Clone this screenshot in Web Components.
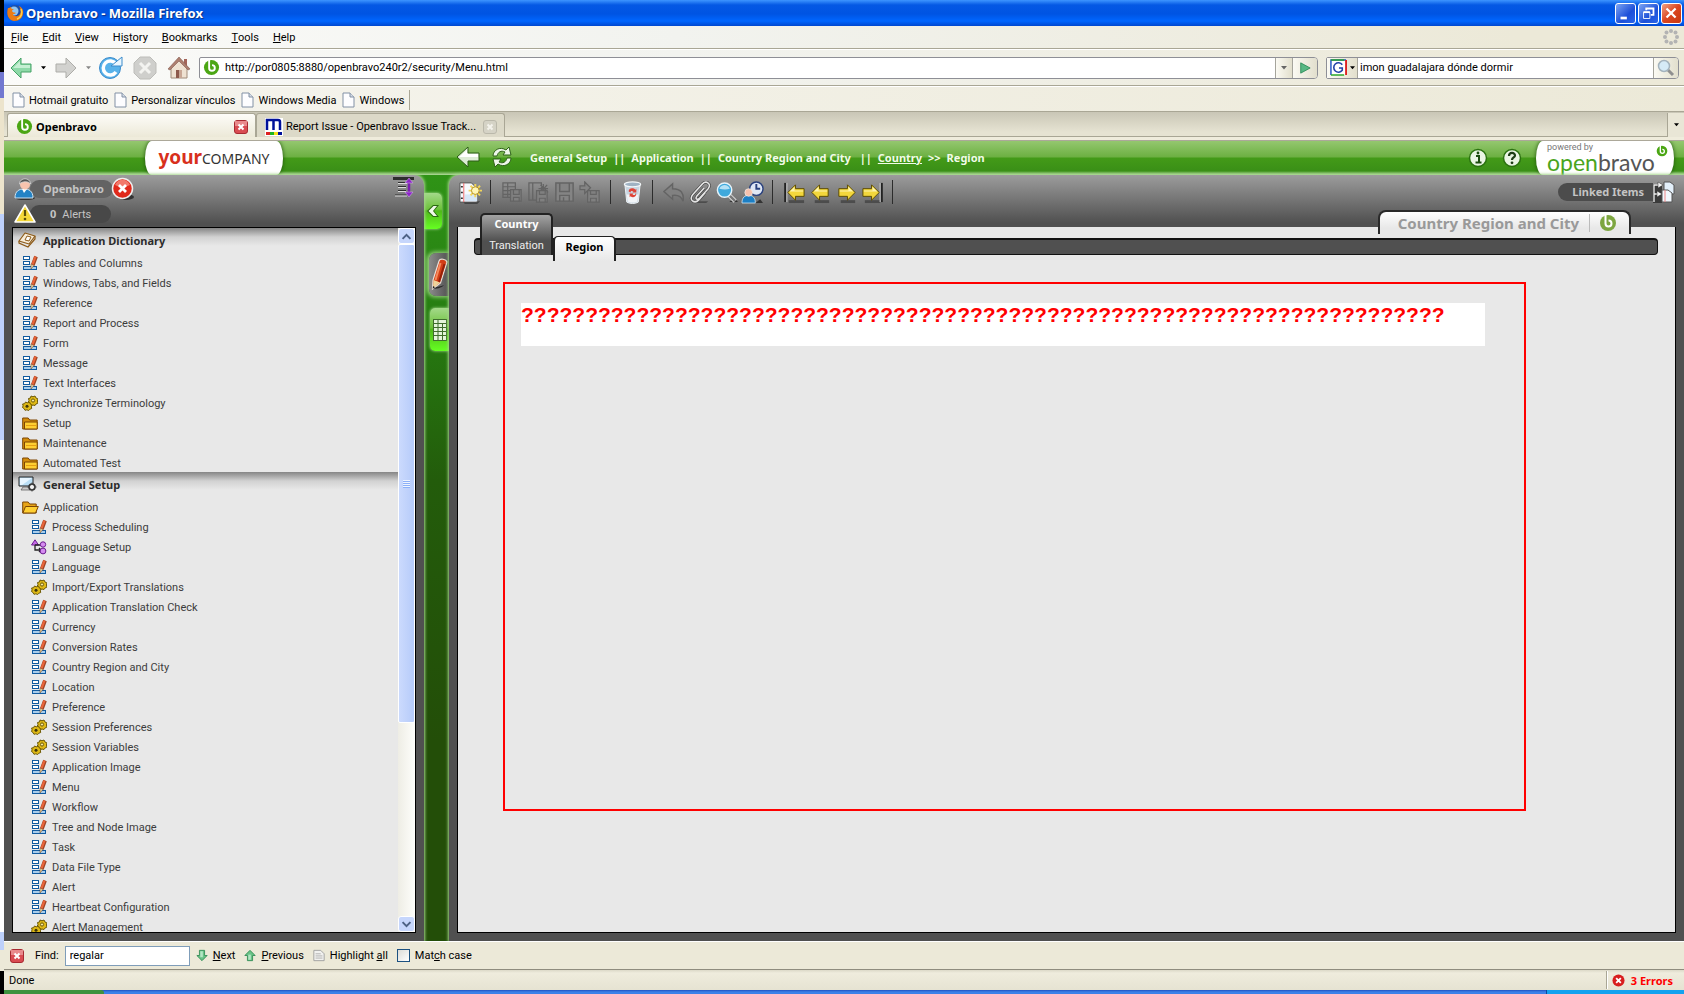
<!DOCTYPE html>
<html lang="en">
<head>
<meta charset="utf-8">
<title>Openbravo - Mozilla Firefox</title>
<style>
    :root{
        --ui-font: Roboto, "Noto Sans", sans-serif;
        --ui-bold: "Noto Sans", "DejaVu Sans", sans-serif;
        --chrome: #ece9d8;
        --panel: #505050;
        --paper: #e8e8e8;
        --panel-top: linear-gradient(#9c9c9c 0, #505050 48px);
        --glow: #a5d58c;
    }
    body{
        margin:0;
        height:100vh;
        overflow:hidden;
        font-family: var(--ui-font);
        font-size:11px;
        color:#000;
    }
</style>
</head>
<body>
<ob-desktop></ob-desktop>
<script>
const ICONS = {
    firefox: ['0 0 18 18', `<circle cx="9" cy="9" r="8" fill="#1c4fa8"/><circle cx="8" cy="7" r="4.5" fill="#8fc4f2"/><path d="M2 4C0 10 2 16 8 17c7 0 10-5 9-11-1-2-2-3-4-4 2 3 2 6 1 8-2 3-6 3-7 0 1 0 2 0 3-1-2-1-3 0-4-2 0-1 1-1 2-2-2 0-3 0-3-2-2 1-2 1-3 1z" fill="#ec7c15"/><path d="M15 5c2 4 0 9-4 10" fill="none" stroke="#ffd24a" stroke-width="1.5"/>`],
    back: ['0 0 24 24', `<path d="M2 12 12 2v6h10v8H12v6z" fill="#8ed9a8" stroke="#45a267" stroke-linejoin="round"/><path d="M4 12 11 5v4h10v3z" fill="#c5efd2"/>`],
    forward: ['0 0 24 24', `<path d="M22 12 12 2v6H2v8h10v6z" fill="#d2d2cf" stroke="#adada9" stroke-linejoin="round"/>`],
    drop: ['0 0 6 4', `<path d="M0 0h6L3 3.5z" fill="currentColor"/>`],
    reload: ['0 0 24 24', `<circle cx="11" cy="12" r="10.5" fill="#58b2ea" stroke="#3b8bcb"/><path d="M17 16a7 7 0 1 1 0-8" fill="none" stroke="#fff" stroke-width="3.5"/><path d="M12 10h11V1z" fill="#eaf7ff" stroke="#3b8bcb"/>`],
    stop: ['0 0 24 24', `<path d="M7 1h10l6 6v10l-6 6H7l-6-6V7z" fill="#cfcfcc" stroke="#bdbdb9"/><path d="M7 7l10 10M17 7 7 17" stroke="#f3f3f0" stroke-width="3"/>`],
    home: ['0 0 24 24', `<path d="M17 3h3v7h-3z" fill="#a4655a"/><path d="M4 11 12 3l8 8v11H4z" fill="#efe2d2" stroke="#a08b78"/><path d="M1 13 12 1l11 12-2 1L12 5 3 14z" fill="#ad7f70" stroke="#84594d" stroke-width=".6"/><path d="M9 14h6v8H9z" fill="#8d5a4c"/><path d="M12 14h3v8h-3z" fill="#c9a795"/>`],
    go: ['0 0 14 14', `<path d="M2 1 13 7 2 13z" fill="#58b884" stroke="#2c8b58"/>`],
    google: ['0 0 18 18', `<path d="M1 1h16v16H1z" fill="#fff"/><path d="M1 17V1h16" fill="none" stroke="#1d50c4" stroke-width="1.5"/><path d="M17 1v16" stroke="#d22" stroke-width="2"/><path d="M1 1h14M1 17h14" stroke="#2da82d" stroke-width="1.5"/><path d="M13 6a5 5 0 1 0 0 6V9.500H9.500" fill="none" stroke="#2343a8" stroke-width="1.7"/>`],
    glass: ['0 0 18 18', `<path d="M10 10l6 6" stroke="#8f8f8f" stroke-width="3"/><circle cx="7" cy="7" r="5.500" fill="#d6ebf7" stroke="#a4b3bd" stroke-width="1.500"/>`],
    throbber: ['0 0 18 18', `<g fill="#b3b3b3"><circle cx="9" cy="3" r="2"/><circle cx="13.500" cy="4.500" r="2"/><circle cx="15" cy="9" r="2"/><circle cx="13.500" cy="13.500" r="2"/><circle cx="9" cy="15" r="2"/><circle cx="4.500" cy="13.500" r="2"/><circle cx="3" cy="9" r="2"/><circle cx="4.500" cy="4.500" r="2"/></g>`],
    page: ['0 0 14 16', `<path d="M2 1h7l4 4v10H2z" fill="#fdfdff" stroke="#8291a5"/><path d="M9 1v4h4" fill="#d5dce6" stroke="#8291a5"/>`],
    bravo: ['0 0 18 18', `<circle cx="9" cy="9" r="8" fill="var(--mark, #4ba614)"/><path d="M6.500 0v9.500a3 3 0 1 0 3-3" fill="none" stroke="#fff" stroke-width="2"/>`],
    mantis: ['0 0 18 18', `<path d="M0 0h18v18H0z" fill="#fff"/><path d="M2 12V2h11a2 2 0 0 1 2 2v8M8.500 2v10" fill="none" stroke="#00109a" stroke-width="2.500"/><path d="M1 14h4v3H1z" fill="#d22"/><path d="M5 14h4v3H5z" fill="#1fb41f"/><path d="M9 14h4v3H9z" fill="#f6e21a"/><path d="M13 14h4v3h-4z" fill="#00109a"/>`],
    close: ['0 0 14 14', `<rect x=".5" y=".5" width="13" height="13" rx="2.500" fill="#d94c52" stroke="#a72a31"/><path d="M1 1h12v5H1z" fill="#e98a8c"/><path d="M4.500 4.500l5 5m0-5l-5 5" stroke="#fff" stroke-width="2"/>`],
    closeoff: ['0 0 14 14', `<rect x=".5" y=".5" width="13" height="13" rx="2.500" fill="#d5d3c6" stroke="#bab8aa"/><path d="M4.500 4.500l5 5m0-5l-5 5" stroke="#f4f3ec" stroke-width="2"/>`],
    gback: ['0 0 24 24', `<path d="M1 12 12 2v6h11v8H12v6z" fill="#dcecd4" stroke="#2c5c17"/><path d="M3 12 11 5v4h11v3z" fill="#fff"/>`],
    grefresh: ['0 0 22 22', `<g fill="#eef7ea" stroke="#2f6219"><path d="M2 10c0-6 7-10 13-6l3-3 2 8h-8l2-3c-4-2-7 0-8 4z"/><path d="M20 12c0 6-7 10-13 6l-3 3-2-8h8l-2 3c4 2 7 0 8-4z"/></g>`],
    info: ['0 0 20 20', `<circle cx="10" cy="10" r="8.500" fill="#eaf5e4" stroke="#2b7210" stroke-width="1.500"/><path d="M8 8h3v6M7.500 14.500h6" fill="none" stroke="#1d4d10" stroke-width="2"/><circle cx="10" cy="5" r="1.400" fill="#1d4d10"/>`],
    help: ['0 0 20 20', `<circle cx="10" cy="10" r="8.500" fill="#eaf5e4" stroke="#2b7210" stroke-width="1.500"/><path d="M7 8c0-4 6-4 6-.5 0 2-3 2-3 4.500" fill="none" stroke="#1d3d16" stroke-width="2.200"/><circle cx="10" cy="14.800" r="1.400" fill="#1d3d16"/>`],
    user: ['0 0 22 22', `<ellipse cx="11" cy="20" rx="10" ry="2" fill="#333"/><path d="M1 20c0-7 4-9 9-9s9 2 9 9z" fill="#2483c5" stroke="#cfe3f2"/><path d="M8 11l2 4 3-4z" fill="#fff"/><circle cx="11" cy="6.500" r="5" fill="#f7c3ae"/><path d="M5.500 6c0-7 11-7 11 0-2-3-8-3-11 0z" fill="#555" stroke="#ddd" stroke-width=".8"/>`],
    logout: ['0 0 24 24', `<ellipse cx="15" cy="20" rx="8" ry="3" fill="#333"/><circle cx="11.500" cy="11.500" r="10" fill="#e02a1c" stroke="#eee" stroke-width="1.500"/><path d="M4 8c3-7 12-7 15 0-4 2-10 3-15 0z" fill="#f2796b"/><path d="M8 8l7 7m0-7l-7 7" stroke="#fff" stroke-width="2.800"/>`],
    alert: ['0 0 22 20', `<path d="M11 1 21 18H1z" fill="#f5d839" stroke="#fff" stroke-width="1.500" stroke-linejoin="round"/><path d="M11 6v6" stroke="#5d5108" stroke-width="2.200"/><circle cx="11" cy="15" r="1.300" fill="#5d5108"/>`],
    expand: ['0 0 22 22', `<path d="M0 1h21v3H0z" fill="#2e2e2e"/><path d="M5 6.500h9M5 10.500h8M5 14.500h8M2 19h12" stroke="#2e2e2e"/><path d="M5 7.500h9M5 11.500h8M5 15.500h8M2 20h12" stroke="#ddd"/><path d="M16 5v13" stroke="#7a1fb0" stroke-width="2.500"/><path d="M12 7l4-5 4 5zM12 16l4 5 4-5z" fill="#8d24c9" stroke="#d9b6ee" stroke-width=".5"/>`],
    book: ['0 0 18 16', `<path d="M1 9 7 1l10 3-6 8z" fill="#f7ecd8" stroke="#8d5a17" stroke-width="1.200" stroke-linejoin="round"/><path d="M1 9v2l9 4 7-8V4" fill="none" stroke="#8d5a17" stroke-width="1.200"/><path d="M7 8l2-4 4 1-2 4z" fill="#fff" stroke="#8d5a17"/>`],
    setup: ['0 0 19 16', `<path d="M1 1h14v9H1z" fill="#b9def5" stroke="#222"/><path d="M2 2h12L4 9H2z" fill="#e8f6ff"/><path d="M5 11h6l1 3H3z" fill="#ccc" stroke="#555" stroke-width=".7"/><circle cx="14" cy="11" r="3" fill="#eee" stroke="#333" stroke-width="1.500"/><path d="M14 6.500v9M9.500 11h9M11 8l6 6M17 8l-6 6" stroke="#444"/><circle cx="14" cy="11" r="2" fill="#f4f4f4"/>`],
    win: ['0 0 16 16', `<g fill="#fff" stroke="#115a9e"><rect x="1.500" y="1.500" width="6" height="3"/><rect x="1.500" y="6.500" width="6" height="3"/><rect x="1.500" y="11.500" width="13" height="3" fill="#a8cdec"/></g><path d="M14 1.500 10.800 10" stroke="#a04423" stroke-width="3.800"/><path d="M13.500 1.500 10.500 9.500" stroke="#e8653a" stroke-width="2.200"/><path d="M9 9l3 1.500L9 14z" fill="#f0d9a6" stroke="#6b3a1a" stroke-width=".5"/>`],
    gear: ['0 0 16 16', `<g fill="#dfb916" stroke="#6d5905" stroke-width="1"><path d="M9 1l2 .8L13 1l1 2 2 1-.6 2 .6 2-2 1-1 1.500L11 10l-2 .5L8 8.500 6 7.500 7 5.500 6.500 3.500 8.500 3z"/><path d="M3.500 7l1.800.8L7.500 7l.8 2 1.700 1-.6 1.800.3 1.700-2 .8-1 1.200-1.800-.7L3 15.300 2 13.500.5 12.500l.6-1.700L.6 9 2.600 8.700z"/></g><circle cx="11" cy="5.500" r="1.600" fill="#f4e9a0" stroke="#6d5905"/><circle cx="5" cy="11.200" r="1.500" fill="#3e3508"/>`],
    folder: ['0 0 16 13', `<path d="M.7 1h5.500l1.500 2h7.500v9H.7z" fill="#d48e0c" stroke="#7c4503"/><path d="M2.500 5h12.700v7H2.500z" fill="#ffcf31" stroke="#7c4503"/><path d="M4 8.500h10" stroke="#e49f12"/>`],
    folderopen: ['0 0 17 13', `<path d="M.7 1h5.500l1.500 2h6.500v9H.7z" fill="#e8a417" stroke="#7c4503"/><path d="M3.500 5.500H16.300L13.500 12H.9z" fill="#ffcf31" stroke="#7c4503"/>`],
    flow: ['0 0 16 16', `<path d="M4 .8 7.500 6H.5z" fill="#c46be6" stroke="#6c1d8f"/><path d="M4 6v5h6M8 9l2 2-2 2M4 6h6" fill="none" stroke="#222" stroke-width="1.300"/><circle cx="12" cy="5.500" r="2.700" fill="#d58bf0" stroke="#6c1d8f"/><circle cx="12" cy="12" r="2.900" fill="#d58bf0" stroke="#6c1d8f"/>`],
    chev: ['0 0 14 16', `<path d="M1 8l6-6h6L8 8l5 6H7z" fill="#2b6a12"/><path d="M2.500 8l5-5h3.500L7 8l4 5H7.500z" fill="#f0fae9"/>`],
    pencil: ['0 0 18 34', `<path d="M1 31c4-3 9-2 12-4-2 3-8 4-12 4z" fill="#2a2a2a"/><path d="M8 3c1-3 7-2 8 1L9.500 25 1.500 31 2 22z" fill="#d33f17" stroke="#e9e0d8" stroke-width="1.200"/><path d="M9.500 5 4.500 22" stroke="#f58b5e" stroke-width="2"/><path d="M13.500 6 8 24" stroke="#962008" stroke-width="2"/><path d="M2.500 22l6.500 2.500-7 6z" fill="#eed49a"/><path d="M2 28l2 1.200-2.300 1.500z" fill="#222"/>`],
    table: ['0 0 14 22', `<path d="M0 0h14v22H0z" fill="#3f6e2c"/><path d="M1 1h3.500v3H1zM1 5h3.500v3H1zM1 9h3.500v3H1zM1 13h3.500v3H1zM1 17h3.500v4H1zM5.500 1H13v3H5.500zM5.500 5H9v3H5.500zM5.500 9H9v3H5.500zM5.500 13H9v3H5.500zM5.500 17H9v4H5.500zM10 5h3v3h-3zM10 9h3v3h-3zM10 13h3v3h-3zM10 17h3v4h-3z" fill="#e4f5da"/>`],
    add: ['0 0 24 24', `<path d="M4 21h18l-3 3H6z" fill="#333" opacity=".7"/><path d="M1 2h12l6 6v14H1z" fill="#f5f9fe" stroke="#555"/><path d="M6 14h13v7H6z" fill="#d7e7f7"/><path d="M5 2v20" stroke="#e66" stroke-width="1"/><path d="M2 6h2M2 12h2M2 18h2" stroke="#333" stroke-width="1.500"/><path d="M17 3v14M10 10h14M12 5l10 10M22 5 12 15" stroke="#f2d65b" stroke-width="2"/><circle cx="17" cy="10" r="4" fill="#fff6b5" stroke="#b68f1c"/>`],
    dgrid: ['0 0 24 24', `<g fill="none" stroke="#646464" stroke-width="1.300"><path d="M2 2h13v15H2zM2 6h13M2 10h9M2 14h9M7 2v15"/><path d="M10 9h11v12H10z" fill="#808080"/><path d="M13 9v5h6V9M13 21v-4h6v4"/></g>`],
    dnew: ['0 0 24 24', `<g fill="none" stroke="#646464" stroke-width="1.300"><path d="M2 2h13v18H2zM6 2v18M17 3v10M12 8h10M14 4l8 8M21 4l-7 8"/><path d="M10 10h11v12H10z" fill="#808080"/><path d="M13 10v4h6v-4M13 22v-4h6v4"/></g>`],
    dsave: ['0 0 24 24', `<g fill="none" stroke="#646464" stroke-width="1.500"><path d="M3 2h18v19H3z" fill="#848484"/><path d="M7 2v9h10V2M7 21v-6h10v6M11 17v4"/></g>`],
    dnext: ['0 0 24 24', `<g fill="none" stroke="#646464" stroke-width="1.300"><path d="M1 5h5V1l6 6-6 6V9H1z" fill="#848484"/><path d="M9 10h12v12H9z" fill="#808080"/><path d="M12 10v4h6v-4M12 22v-4h6v4"/></g>`],
    trash: ['0 0 22 24', `<path d="M3 3h16l-2 19c-3 2-9 2-12 0z" fill="#c8d6e2" stroke="#eef3f7"/><path d="M5 14h12l-1 7c-2 2-8 2-10 0z" fill="#f2f5f8"/><ellipse cx="11" cy="3.500" rx="8.500" ry="2.500" fill="#9fb2c3" stroke="#f4f8fa" stroke-width="1.300"/><path d="M7 11c0-4 5-4 7-2l1-1v4h-4l1-1c-2-1-3-1-3 1zM15 13c0 4-4 5-6 3l-1 1v-4h4l-1 1c2 1 3 1 3-1z" fill="#df4437"/>`],
    undo: ['0 0 24 24', `<path d="M1 11 10 3v5c9 0 12 5 11 13-2-5-5-7-11-6v4z" fill="#818181" stroke="#646464" stroke-width="1.500"/>`],
    clip: ['0 0 24 24', `<path d="M5 21h15l-2 2H6z" fill="#333" opacity=".6"/><path d="M16 7 8 16c-2 3 1 4 3 2l9-10c4-5-2-9-6-5L4 14c-5 6 2 10 6 6l7-8" fill="none" stroke="#444" stroke-width="3"/><path d="M16 7 8 16c-2 3 1 4 3 2l9-10c4-5-2-9-6-5L4 14c-5 6 2 10 6 6l7-8" fill="none" stroke="#e4e4e4" stroke-width="1.600"/>`],
    find: ['0 0 24 24', `<path d="M15 22h9l-4-4z" fill="#333"/><path d="M14 14l7 7" stroke="#ddd" stroke-width="4.500"/><path d="M14 14l7 7" stroke="#777" stroke-width="2.500"/><circle cx="10" cy="9.500" r="7.500" fill="#3fa9dc" stroke="#e6f3fa" stroke-width="1.500"/><path d="M4.500 8c2-5 9-5 11 0-3 1-7 1-11 0z" fill="#b5e2f6"/>`],
    audit: ['0 0 24 24', `<circle cx="16" cy="8" r="7" fill="#dfe7f5" stroke="#2a417e" stroke-width="1.500"/><path d="M16 3v5h4" fill="none" stroke="#2a417e" stroke-width="2"/><path d="M1 23c0-6 3-8 7-8s7 2 7 8z" fill="#1d7fc4" stroke="#d9ebf7" stroke-width=".8"/><circle cx="8" cy="12" r="4" fill="#f6c1ad" stroke="#eee" stroke-width=".7"/><path d="M15 23h8l-3-4z" fill="#333"/>`],
    first: ['0 0 24 24', `<path d="M6 20h16v3H6z" fill="#333" opacity=".6"/><path d="M2.500 2v20" stroke="#222" stroke-width="2.500"/><path d="M4 2v20" stroke="#ddd"/><path d="M5 12l8-8v4h9v8h-9v4z" fill="#f3d73c" stroke="#5b4a00"/><path d="M7 11l5-5v4h9v1z" fill="#fdf4ae"/>`],
    prev: ['0 0 24 24', `<path d="M6 20h15v3H6z" fill="#333" opacity=".6"/><path d="M3 12l8-8v4h9v8h-9v4z" fill="#f3d73c" stroke="#5b4a00"/><path d="M5 11l5-5v4h9v1z" fill="#fdf4ae"/>`],
    next: ['0 0 24 24', `<path d="M6 20h15v3H6z" fill="#333" opacity=".6"/><path d="M21 12l-8-8v4H4v8h9v4z" fill="#f3d73c" stroke="#5b4a00"/><path d="M19 11l-5-5v4H5v1z" fill="#fdf4ae"/>`],
    last: ['0 0 24 24', `<path d="M4 20h16v3H4z" fill="#333" opacity=".6"/><path d="M21.500 2v20" stroke="#222" stroke-width="2.500"/><path d="M20 2v20" stroke="#ddd"/><path d="M19 12l-8-8v4H2v8h9v4z" fill="#f3d73c" stroke="#5b4a00"/><path d="M17 11l-5-5v4H3v1z" fill="#fdf4ae"/>`],
    linked: ['0 0 22 22', `<path d="M0 3h9v19H0z" fill="#3a3a3a"/><path d="M1 21V4h8M1 13h7" fill="none" stroke="#eee" stroke-width="1.300"/><path d="M5 1l5 3-5 3zM4 10l5 3-5 3z" fill="#f4f4f4" stroke="#333" stroke-width=".5"/><path d="M11 1h6l4 3v9H11z" fill="#e3effa" stroke="#555"/><path d="M9 9h6l4 3v9H9z" fill="#f1f7fd" stroke="#555"/><path d="M12 9v12" stroke="#e88"/>`],
    sup: ['0 0 14 8', `<path d="M2 7l5-5 5 5" fill="none" stroke="#4d6185" stroke-width="2.500"/>`],
    sdown: ['0 0 14 8', `<path d="M2 1l5 5 5-5" fill="none" stroke="#4d6185" stroke-width="2.500"/>`],
    fnext: ['0 0 14 14', `<path d="M4 1h6v6h3l-6 6-6-6h3z" fill="#69c387" stroke="#2f8a53"/><path d="M5 2h3v7H5z" fill="#b4e6c4"/>`],
    fprev: ['0 0 14 14', `<path d="M4 13h6V7h3L7 1 1 7h3z" fill="#69c387" stroke="#2f8a53"/><path d="M5 6h3v6H5z" fill="#b4e6c4"/>`],
    fmark: ['0 0 14 14', `<path d="M1 1h8l4 4v8H1z" fill="#f1f1ef" stroke="#999"/><path d="M3 5h6M3 7.500h8M3 10h8" stroke="#aaa"/>`],
    error: ['0 0 14 14', `<circle cx="7" cy="7" r="6.500" fill="#d81e1e"/><path d="M4.500 4.500l5 5m0-5l-5 5" stroke="#fff" stroke-width="2"/>`],
    min: ['0 0 21 21', `<path d="M5 14h7v3H5z" fill="#fff"/>`],
    restore: ['0 0 21 21', `<path d="M8 7V5h8v7h-3" fill="none" stroke="#fff" stroke-width="2"/><path d="M5 9h7v7H5z" fill="none" stroke="#fff"/><path d="M5 9h7" stroke="#fff" stroke-width="2"/>`],
    quit: ['0 0 21 21', `<path d="M5 5l10 10M15 5 5 15" stroke="#fff" stroke-width="2.500"/>`]
};

// shared shell: every element gives its markup and styles through view()
class ObElement extends HTMLElement{
    constructor() {
        super();
        this.attachShadow({ mode: 'open' });
    }
    connectedCallback() {
        this.shadowRoot.innerHTML = /*html*/ `
        <style>
            :host{ display:block; box-sizing:border-box; }
            *{ box-sizing:border-box; }
            button{ border:0; padding:0; margin:0; background:none; font:inherit; color:inherit; display:flex; align-items:center; }
            a{ color:inherit; text-decoration:none; }
            input{ font:inherit; margin:0; }
        </style>` + this.view();
    }
    view() { return '<slot></slot>'; }
}

class ObIcon extends ObElement{
    view() {
        const [box, body] = ICONS[this.getAttribute('name')];
        const [, , w, h] = box.split(' ');
        const width = this.getAttribute('w') || w;
        const height = this.getAttribute('h') || h;
        return /*html*/ `
        <style>
            :host{ display:inline-flex; flex:none; }
            svg{ display:block; }
        </style>
        <svg width="${width}" height="${height}" viewBox="${box}" aria-hidden="true">${body}</svg>`;
    }
}

class ObDesktop extends ObElement{
    view() {
        return /*html*/ `
        <style>
            :host{
                display:grid;
                grid-template-columns:4px minmax(0, 1fr);
                grid-template-rows:minmax(0, 1fr) 4px;
                height:100%;
            }
            .behind{
                background:linear-gradient(#000 72px, #7278d0 72px 98px, #ece4cc 98px 214px, #bdd0fb 214px 440px, #fff 440px 932px, #bdd0fb 932px 950px, #ece9d8 950px 971px, #000 971px);
            }
            .window{ display:flex; flex-direction:column; min-height:0; }
            ob-app{ flex:1; min-height:0; }
            .taskbar{
                grid-column:2;
                display:grid;
                grid-template-columns:100px 1fr 138px;
                background:linear-gradient(#1f52c0, #3c81e8 2px);
            }
            .start{ background:#3f9240; border-radius:0 3px 0 0; }
            .tray{ grid-column:3; background:#14a2ef; border-left:1px solid #0b4a9c; }
            .corner{ background:#000; }
        </style>
        <div class="behind"></div>
        <div class="window">
            <ff-titlebar>Openbravo - Mozilla Firefox</ff-titlebar>
            <ff-menubar></ff-menubar>
            <ff-navbar></ff-navbar>
            <ff-bookmarks></ff-bookmarks>
            <ff-tabs></ff-tabs>
            <ob-app></ob-app>
            <ff-findbar></ff-findbar>
            <ff-status></ff-status>
        </div>
        <div class="corner"></div>
        <div class="taskbar"><div class="start"></div><div class="tray"></div></div>`;
    }
}

class FfTitlebar extends ObElement{
    view() {
        return /*html*/ `
        <style>
            :host{
                display:flex;
                align-items:center;
                gap:2px;
                height:26px;
                padding:0 2px;
                background:linear-gradient(#3d95ff, #0458e4 5px, #0054e3 14px, #0066ff 21px, #0047cf);
                color:#fff;
                font:bold 13px var(--ui-bold);
                text-shadow:1px 1px 1px #0f2f80;
            }
            .title{ flex:1; }
            button{ width:21px; height:21px; border:1px solid #fff; border-radius:3px; background:linear-gradient(135deg, #7da5f3, #1c4fd8 60%, #2a66ea); }
            .buttons{ display:flex; gap:2px; }
            .quit{ background:linear-gradient(135deg, #f0a184, #da4620 50%, #c8380f); }
        </style>
        <ob-icon name="firefox"></ob-icon>
        <span class="title"><slot></slot></span>
        <div class="buttons">
            <button aria-label="Minimize"><ob-icon name="min" w="19" h="19"></ob-icon></button>
            <button aria-label="Restore"><ob-icon name="restore" w="19" h="19"></ob-icon></button>
            <button class="quit" aria-label="Close"><ob-icon name="quit" w="19" h="19"></ob-icon></button>
        </div>`;
    }
}

class FfMenubar extends ObElement{
    view() {
        return /*html*/ `
        <style>
            :host{
                display:flex;
                align-items:center;
                gap:14px;
                height:23px;
                padding:0 4px 0 7px;
                background:linear-gradient(90deg, #fbfbf9, #f2f3ef 40%, var(--chrome) 90%);
                border-bottom:1px solid #a9a695;
            }
            span{ flex:1; }
        </style>
        <button><u>F</u>ile</button>
        <button><u>E</u>dit</button>
        <button><u>V</u>iew</button>
        <button>Hi<u>s</u>tory</button>
        <button><u>B</u>ookmarks</button>
        <button><u>T</u>ools</button>
        <button><u>H</u>elp</button>
        <span></span>
        <ob-icon name="throbber"></ob-icon>`;
    }
}

class FfNavbar extends ObElement{
    view() {
        return /*html*/ `
        <style>
            :host{
                display:flex;
                align-items:center;
                height:37px;
                padding:0 5px 0 5px;
                background:linear-gradient(90deg, #fbfbf9, #f2f3ef 40%, var(--chrome) 90%);
                border-top:1px solid #fff;
                border-bottom:1px solid #a9a695;
            }
            .tools{ display:flex; align-items:center; gap:8px; }
            .tools .wide{ margin-right:2px; }
            .off{ color:#888; }
            .field{ display:flex; align-items:center; height:22px; border:1px solid #8e8f96; border-radius:2px 4px 4px 2px; background:#fff; }
            .url{ flex:1; margin:0 8px; padding-left:3px; gap:3px; }
            input{ flex:1; min-width:0; height:18px; border:0; outline:0; padding:0 2px; background:#fff; color:#000; }
            .cell{ height:20px; justify-content:center; background:linear-gradient(90deg, #fbfaf3, #e2dfcd); border-left:1px solid #a5a49b; color:#666; }
            .drop{ width:17px; }
            .url .go{ margin-left:-3px; }
            .go{ width:25px; border-radius:0 3px 3px 0; }
            .search{ width:353px; }
            .engine{ width:31px; gap:3px; border-left:0; border-right:1px solid #a5a49b; color:#000; }
        </style>
        <div class="tools">
            <button aria-label="Back"><ob-icon name="back"></ob-icon></button>
            <button aria-label="Back history"><ob-icon name="drop" w="5"></ob-icon></button>
            <button aria-label="Forward"><ob-icon name="forward"></ob-icon></button>
            <button class="off" aria-label="Forward history"><ob-icon name="drop" w="5"></ob-icon></button>
            <button class="wide" aria-label="Reload"><ob-icon name="reload"></ob-icon></button>
            <button class="wide" aria-label="Stop"><ob-icon name="stop"></ob-icon></button>
            <button aria-label="Home"><ob-icon name="home"></ob-icon></button>
        </div>
        <div class="field url">
            <ob-icon name="bravo" w="17" h="17"></ob-icon>
            <input aria-label="Location" value="http://por0805:8880/openbravo240r2/security/Menu.html">
            <button class="cell drop" aria-label="Show history"><ob-icon name="drop"></ob-icon></button>
            <button class="cell go" aria-label="Go"><ob-icon name="go" w="12" h="12"></ob-icon></button>
        </div>
        <div class="field search">
            <button class="cell engine" aria-label="Search engine"><ob-icon name="google" w="17" h="17"></ob-icon><ob-icon name="drop" w="5"></ob-icon></button>
            <input aria-label="Search" value="imon guadalajara dónde dormir">
            <button class="cell go" aria-label="Search"><ob-icon name="glass"></ob-icon></button>
        </div>`;
    }
}

class FfBookmarks extends ObElement{
    view() {
        return /*html*/ `
        <style>
            :host{
                display:flex;
                align-items:center;
                gap:5px;
                height:26px;
                padding:2px 0 0 7px;
                background:linear-gradient(90deg, #f6f5ef, var(--chrome));
                border-top:1px solid #fff;
                border-bottom:1px solid #a9a695;
            }
            a{ display:flex; align-items:center; gap:4px; }
            i{ height:20px; border-left:1px solid #a9a695; }
        </style>
        <a href="#"><ob-icon name="page"></ob-icon>Hotmail gratuito</a>
        <a href="#"><ob-icon name="page"></ob-icon>Personalizar vínculos</a>
        <a href="#"><ob-icon name="page"></ob-icon>Windows Media</a>
        <a href="#"><ob-icon name="page"></ob-icon>Windows</a>
        <i></i>`;
    }
}

class FfTabs extends ObElement{
    view() {
        return /*html*/ `
        <style>
            :host{
                display:flex;
                align-items:flex-end;
                height:29px;
                padding-left:3px;
                background:linear-gradient(#c9c6b6, #e6e3d2 20px, #e6e3d2 24px);
                border-bottom:1px solid #aca899;
                box-shadow:inset 0 -3px 0 #efecdc, inset 0 -4px 0 #a9a695;
            }
            .tab{ display:flex; align-items:center; gap:3px; width:249px; height:24px; padding:2px 7px 0 8px; border:1px solid #a9a695; border-bottom:0; border-radius:3px 3px 0 0; background:#dcd9c8; margin-bottom:3px; }
            .on{ background:linear-gradient(#fdfcf8, #ece9d8); font:bold 11px var(--ui-bold); }
            .tab button:first-child{ flex:1; gap:3px; white-space:nowrap; }
            .gap{ flex:1; }
            .all{ width:17px; height:24px; justify-content:center; border-left:1px solid #a9a695; background:#e9e6d6; margin-bottom:3px; }
        </style>
        <div class="tab on">
            <button><ob-icon name="bravo" w="17" h="17"></ob-icon>Openbravo</button>
            <button aria-label="Close tab"><ob-icon name="close"></ob-icon></button>
        </div>
        <div class="tab">
            <button><ob-icon name="mantis"></ob-icon>Report Issue - Openbravo Issue Track...</button>
            <button aria-label="Close tab"><ob-icon name="closeoff"></ob-icon></button>
        </div>
        <span class="gap"></span>
        <button class="all" aria-label="List all tabs"><ob-icon name="drop" w="5"></ob-icon></button>`;
    }
}

class ObApp extends ObElement{
    view() {
        return /*html*/ `
        <style>
            :host{
                display:grid;
                grid-template-columns:420px 25px minmax(0, 1fr);
                grid-template-rows:34px minmax(0, 1fr);
                background:linear-gradient(#2f9316 34px, #278012 160px, #235c0b 340px, #234e08 600px);
            }
            ob-header{ grid-column:1 / -1; }
        </style>
        <ob-header></ob-header>
        <ob-sidebar></ob-sidebar>
        <ob-rail></ob-rail>
        <ob-workspace></ob-workspace>`;
    }
}

class ObHeader extends ObElement{
    view() {
        return /*html*/ `
        <style>
            :host{
                display:grid;
                grid-template-columns:452px minmax(0, 1fr) auto;
                background:linear-gradient(#94c76f, #6cb042 16px, #439a18 17px, #3a8f17 30px, #b4dc9e);
                color:#f2fbe9;
                font:bold 11px var(--ui-bold);
            }
            .logo{ display:flex; justify-content:center; height:34px; background:#fff; border-radius:8px / 20px; box-shadow:0 0 4px #1f4f0a; clip-path:inset(0 -6px); }
            .company{ width:138px; margin-left:141px; font:14px/32px var(--ui-bold); color:#333; align-items:baseline; }
            .company b{ font-size:19px; color:#d8301c; }
            nav, .help{ display:flex; align-items:center; padding-bottom:2px; }
            .crumbs{ display:flex; gap:6px; margin-left:17px; white-space:pre; }
            .icons{ display:flex; gap:11px; }
            .crumbs .here{ text-decoration:underline; }
            .help{ gap:14px; padding:0; }
            .brand{ width:138px; margin-right:10px; gap:1px; align-items:flex-start; padding-left:11px; justify-content:flex-start; }
            .brand div{ display:flex; flex-direction:column; font:23px/20px Lato, sans-serif; color:#555; }
            .brand small{ font:9px/10px var(--ui-font); color:#777; padding-top:1px; }
            .brand em{ font-style:normal; color:#4aa51d; }
            .brand ob-icon{ margin-top:4px; }
        </style>
        <div class="company logo"><b>your</b><span>COMPANY</span></div>
        <nav>
            <div class="icons">
                <button aria-label="Go back"><ob-icon name="gback"></ob-icon></button>
                <button aria-label="Refresh"><ob-icon name="grefresh"></ob-icon></button>
            </div>
            <div class="crumbs"><span>General Setup</span><span>||</span><span>Application</span><span>||</span><span>Country Region and City </span><span>||</span><a class="here" href="#">Country</a><span>&gt;&gt;</span><span>Region</span></div>
        </nav>
        <div class="help">
            <button aria-label="About"><ob-icon name="info"></ob-icon></button>
            <button aria-label="Help"><ob-icon name="help"></ob-icon></button>
            <div class="brand logo"><div><small>powered by</small><span><em>open</em>bravo</span></div><ob-icon name="bravo" w="12" h="12"></ob-icon></div>
        </div>`;
    }
}

const SHEET = 'win';
const MENU = [
    { title: 'Application Dictionary', icon: 'book', items: [
        [SHEET, 'Tables and Columns'], [SHEET, 'Windows, Tabs, and Fields'], [SHEET, 'Reference'],
        [SHEET, 'Report and Process'], [SHEET, 'Form'], [SHEET, 'Message'], [SHEET, 'Text Interfaces'],
        ['gear', 'Synchronize Terminology'], ['folder', 'Setup'], ['folder', 'Maintenance'], ['folder', 'Automated Test']
    ] },
    { title: 'General Setup', icon: 'setup', items: [
        ['folderopen', 'Application'],
        [SHEET, 'Process Scheduling', 1], ['flow', 'Language Setup', 1], [SHEET, 'Language', 1],
        ['gear', 'Import/Export Translations', 1], [SHEET, 'Application Translation Check', 1],
        [SHEET, 'Currency', 1], [SHEET, 'Conversion Rates', 1], [SHEET, 'Country Region and City', 1],
        [SHEET, 'Location', 1], [SHEET, 'Preference', 1], ['gear', 'Session Preferences', 1],
        ['gear', 'Session Variables', 1], [SHEET, 'Application Image', 1], [SHEET, 'Menu', 1],
        [SHEET, 'Workflow', 1], [SHEET, 'Tree and Node Image', 1], [SHEET, 'Task', 1],
        [SHEET, 'Data File Type', 1], [SHEET, 'Alert', 1], [SHEET, 'Heartbeat Configuration', 1],
        ['gear', 'Alert Management', 1]
    ] }
];

class ObSidebar extends ObElement{
    view() {
        return /*html*/ `
        <style>
            :host{
                display:flex;
                flex-direction:column;
                min-height:0;
                padding:0 8px 8px;
                background:var(--panel-top), var(--panel);
                background-color:var(--panel);
                border-radius:0 10px 0 0;
                box-shadow:0 0 3px 1px var(--glow);
                clip-path:inset(-4px -6px 0 0);
            }
            .top{ display:flex; justify-content:space-between; align-items:flex-start; height:52px; padding:1px 1px 0 2px; color:#c4c4c4; }
            .row{ display:flex; align-items:center; height:25px; }
            .pill{ height:18px; line-height:18px; background:#484848; border-radius:9px; margin-left:-6px; padding:0 20px; }
            .name{ font:bold 11px/18px var(--ui-bold); background:#636363; padding:0 9px 0 13px; margin-right:-2px; }
            .row > ob-icon, .row button{ position:relative; }
            b{ font-family:var(--ui-bold); margin-right:6px; }
            .box{ display:grid; grid-template-columns:minmax(0, 1fr) 17px; flex:1; min-height:0; border:1px solid #000; background:var(--paper); }
            .list{ overflow:hidden; }
            .bar{ display:flex; flex-direction:column; background:linear-gradient(90deg, #eeede5, #fefefb); }
            .bar button{ height:16px; justify-content:center; background:#c6d6fc; border:1px solid #fff; border-radius:3px; }
            .thumb{ flex:478 0 0; display:flex; align-items:center; justify-content:center; border:1px solid #fff; border-radius:2px; background:linear-gradient(90deg, #cbdafd, #b6cbfa); }
            .thumb i{ width:7px; height:8px; background:repeating-linear-gradient(#eef4fe 0 1px, #8cb0f8 1px 2px); }
            .rest{ flex:193 0 0; }
        </style>
        <div class="top">
            <div>
                <div class="row"><ob-icon name="user"></ob-icon><span class="pill name">Openbravo</span><button aria-label="Log out"><ob-icon name="logout"></ob-icon></button></div>
                <div class="row"><ob-icon name="alert" h="20"></ob-icon><span class="pill"><b>0</b>Alerts</span></div>
            </div>
            <button aria-label="Expand menu"><ob-icon name="expand"></ob-icon></button>
        </div>
        <div class="box">
            <div class="list">
                ${MENU.map(group => `
                <ob-menu-title icon="${group.icon}">${group.title}</ob-menu-title>
                ${group.items.map(([icon, text, level]) => `<ob-menu-item icon="${icon}" level="${level || 0}">${text}</ob-menu-item>`).join('')}`).join('')}
            </div>
            <div class="bar">
                <button aria-label="Scroll up"><ob-icon name="sup" w="11" h="7"></ob-icon></button>
                <div class="thumb"><i></i></div>
                <div class="rest"></div>
                <button aria-label="Scroll down"><ob-icon name="sdown" w="11" h="7"></ob-icon></button>
            </div>
        </div>`;
    }
}

class ObMenuTitle extends ObElement{
    view() {
        return /*html*/ `
        <style>
            :host{ display:flex; align-items:center; height:24px; padding-left:5px; font:bold 11px var(--ui-bold); color:#2c2c2c; background:linear-gradient(#858585, #d2d2d2 9px, var(--paper) 18px); }
            .icon{ width:25px; display:flex; }
        </style>
        <span class="icon"><ob-icon name="${this.getAttribute('icon')}"></ob-icon></span>
        <slot></slot>`;
    }
}

class ObMenuItem extends ObElement{
    view() {
        return /*html*/ `
        <style>
            a{ display:flex; align-items:center; height:20px; padding:2px 0 0 9px; color:#3c3c3c; }
            :host([level="1"]) a{ padding-left:18px; }
            .icon{ width:21px; height:18px; display:flex; align-items:center; }
        </style>
        <a href="#"><span class="icon"><ob-icon name="${this.getAttribute('icon')}"></ob-icon></span><slot></slot></a>`;
    }
}

class ObRail extends ObElement{
    view() {
        return /*html*/ `
        <style>
            :host{ display:flex; flex-direction:column; align-items:flex-end; padding-top:18px; }
            button{ justify-content:center; background:linear-gradient(#a4d98a, #6cc23a 45%, #4fb81a 50%, #66ff22); box-shadow:0 0 3px #b8e6a0; }
            .hide{ align-self:flex-start; width:18px; height:36px; border-radius:0 5px 5px 0; }
            .form{ width:20px; height:43px; margin-top:24px; padding-left:2px; border-radius:7px 0 0 7px; background:linear-gradient(90deg, #8c8c8c, #505050); box-shadow:-1px 0 4px 1px var(--glow); }
            .grid{ width:19px; height:43px; margin-top:12px; border-radius:5px 0 0 5px; }
        </style>
        <button class="hide" aria-label="Hide menu"><ob-icon name="chev"></ob-icon></button>
        <button class="form" aria-label="Form view"><ob-icon name="pencil"></ob-icon></button>
        <button class="grid" aria-label="Grid view"><ob-icon name="table"></ob-icon></button>`;
    }
}

class ObToolbar extends ObElement{
    view() {
        const groups = [
            [['add', 'New']],
            [['dgrid', 'Save and grid'], ['dnew', 'Save and new'], ['dsave', 'Save'], ['dnext', 'Save and next']],
            [['trash', 'Delete']],
            [['undo', 'Undo'], ['clip', 'Attachments'], ['find', 'Find'], ['audit', 'Audit']],
            [['first', 'First'], ['prev', 'Previous'], ['next', 'Next'], ['last', 'Last']]
        ];
        const tool = ([icon, label]) => `<button aria-label="${label}"><ob-icon name="${icon}" h="23" w="23"></ob-icon></button>`;
        return /*html*/ `
        <style>
            :host{ display:flex; align-items:center; height:34px; padding-right:1px; color:#c4c4c4; font:bold 11px var(--ui-bold); }
            button{ width:26px; justify-content:center; }
            i{ width:1px; height:24px; margin:0 8px 0 7px; background:#2c2c2c; }
            .gap{ flex:1; }
            .linked{ width:auto; }
            .linked span{ line-height:18px; padding:0 9px 0 14px; border-radius:9px 0 0 9px; background:#4c4c4c; }
        </style>
        ${groups.map(group => group.map(tool).join('') + '<i></i>').join('')}
        <span class="gap"></span>
        <button class="linked"><span>Linked Items</span><ob-icon name="linked"></ob-icon></button>`;
    }
}

class ObWorkspace extends ObElement{
    view() {
        return /*html*/ `
        <style>
            :host{
                display:flex;
                flex-direction:column;
                min-height:0;
                padding:0 8px 8px;
                background:var(--panel-top), var(--panel);
                background-color:var(--panel);
                border-radius:10px 0 0 0;
                box-shadow:0 0 3px 1px var(--glow);
                clip-path:inset(-4px 0 0 -6px);
            }
            .heading{ display:flex; justify-content:flex-end; height:18px; padding-right:45px; }
            .title{ position:relative; display:flex; align-items:center; gap:10px; height:24px; padding:0 12px 0 18px; margin-top:1px; background:linear-gradient(#fff, var(--paper) 16px); border:2px solid #2a2a2a; border-bottom:0; border-radius:8px 8px 0 0; font:bold 15px var(--ui-bold); color:#999; --mark:#7da640; }
            .title ob-icon{ padding-left:9px; border-left:1px solid #bbb; }
            .paper{ flex:1; min-height:0; display:flex; flex-direction:column; padding:0 17px 0 16px; background:var(--paper); border:1px solid #000; border-top:0; }
            .tabs{ position:relative; display:flex; height:17px; margin-top:11px; background:#505050; border:1px solid #111; border-top-width:2px; border-radius:4px; color:#fff; }
            .tabs button{ justify-content:center; }
            .stack{ display:flex; flex-direction:column; width:73px; height:42px; margin:-27px 0 0 5px; border-radius:5px 5px 0 0; border:2px solid #222; border-bottom:0; background:linear-gradient(#a3a3a3, #505050 26px); }
            .country{ font:bold 11px var(--ui-bold); height:20px; padding-bottom:4px; }
            .sub{ height:20px; color:#eee; }
            .region{ width:63px; height:25px; margin-top:-4px; padding-bottom:6px; border:2px solid #222; border-width:1px 2px 0; border-radius:5px 5px 0 0; background:linear-gradient(#fff, var(--paper)); color:#000; font:bold 11px var(--ui-bold); }
            .frame{ flex:1; margin:27px 132px 121px 29px; padding:19px 39px 0 16px; border:2px solid #f00; }
            .message{ height:43px; overflow:hidden; background:#fff; color:#f00; font:bold 21px/24px "Liberation Sans", Arial, sans-serif; white-space:nowrap; }
        </style>
        <ob-toolbar></ob-toolbar>
        <div class="heading"><div class="title"><span>Country Region and City</span><ob-icon name="bravo"></ob-icon></div></div>
        <div class="paper">
            <div class="tabs">
                <div class="stack"><button class="country">Country</button><button class="sub">Translation</button></div>
                <button class="region">Region</button>
            </div>
            <div class="frame"><div class="message">${'?'.repeat(72)}</div></div>
        </div>`;
    }
}

class FfFindbar extends ObElement{
    view() {
        return /*html*/ `
        <style>
            :host{ display:flex; align-items:center; height:29px; padding-left:6px; background:var(--chrome); border-top:1px solid #fff; border-bottom:1px solid #8f8c7e; }
            label{ display:flex; align-items:center; }
            .find{ gap:6px; margin:0 6px 0 11px; }
            input[type=text]{ width:125px; height:20px; border:1px solid #7f9db9; padding:0 4px; background:#fff; }
            input[type=checkbox]{ appearance:none; width:13px; height:13px; margin-right:5px; border:1px solid #1c5180; background:linear-gradient(135deg, #dcdcd7, #fff); }
            .acts{ display:flex; gap:9px; margin-right:9px; }
            .acts button{ gap:5px; }
        </style>
        <button aria-label="Close find bar"><ob-icon name="close"></ob-icon></button>
        <label class="find">Find: <input type="text" value="regalar"></label>
        <div class="acts">
            <button><ob-icon name="fnext" w="12" h="13"></ob-icon><span><u>N</u>ext</span></button>
            <button><ob-icon name="fprev" w="12" h="13"></ob-icon><span><u>P</u>revious</span></button>
            <button><ob-icon name="fmark" w="12" h="13"></ob-icon><span>Highlight <u>a</u>ll</span></button>
        </div>
        <label><input type="checkbox"><span>Mat<u>c</u>h case</span></label>`;
    }
}

class FfStatus extends ObElement{
    view() {
        return /*html*/ `
        <style>
            :host{ display:flex; align-items:center; justify-content:space-between; height:20px; padding:0 0 0 5px; background:linear-gradient(#dcd9c8, #efecdd 3px, #e6e3d2); }
            .errors{ gap:6px; height:18px; padding:0 11px 0 5px; border-left:1px solid #a9a695; box-shadow:inset 1px 0 #fff; color:#f00; font:bold 11px var(--ui-bold); }
        </style>
        <span>Done</span>
        <button class="errors"><ob-icon name="error" w="13" h="13"></ob-icon>3 Errors</button>`;
    }
}

customElements.define("ob-icon", ObIcon);
customElements.define("ff-titlebar", FfTitlebar);
customElements.define("ff-menubar", FfMenubar);
customElements.define("ff-navbar", FfNavbar);
customElements.define("ff-bookmarks", FfBookmarks);
customElements.define("ff-tabs", FfTabs);
customElements.define("ff-findbar", FfFindbar);
customElements.define("ff-status", FfStatus);
customElements.define("ob-header", ObHeader);
customElements.define("ob-menu-title", ObMenuTitle);
customElements.define("ob-menu-item", ObMenuItem);
customElements.define("ob-sidebar", ObSidebar);
customElements.define("ob-rail", ObRail);
customElements.define("ob-toolbar", ObToolbar);
customElements.define("ob-workspace", ObWorkspace);
customElements.define("ob-app", ObApp);
customElements.define("ob-desktop", ObDesktop);
</script>
</body>
</html>
